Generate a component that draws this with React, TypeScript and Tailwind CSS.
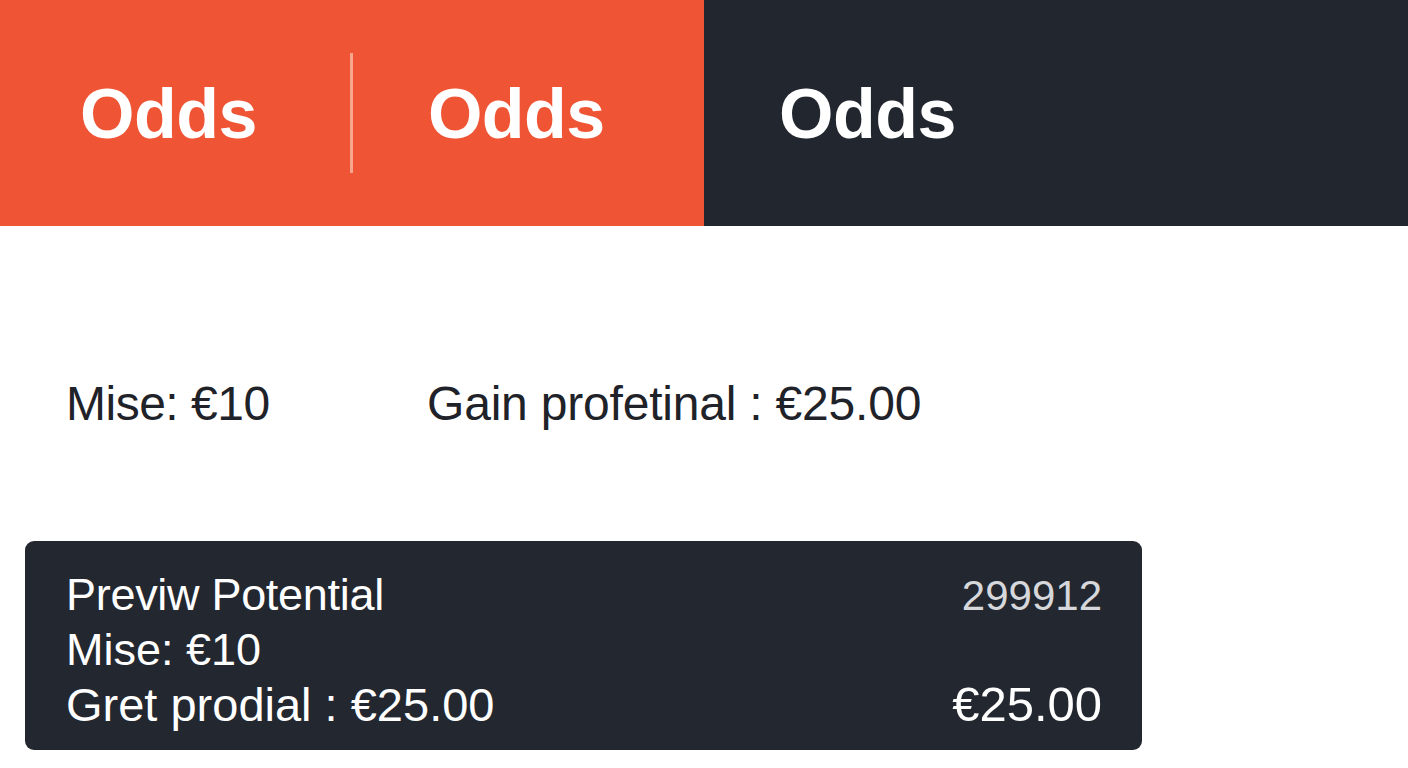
export default function App() {
  const font = { fontFamily: '"Liberation Sans", Arial, sans-serif' };
  return (
    <div className="w-[1408px] h-[768px] bg-white overflow-hidden" style={font}>
      {/* Odds tab bar */}
      <div className="flex h-[226px]">
        <div className="w-[704px] bg-[#ef5535] flex items-center">
          <span className="pl-[80px] pt-[1px] text-[70px] leading-[70px] font-bold text-white tracking-[-0.5px]">
            Odds
          </span>
          <div className="ml-[93px] w-[3px] h-[120px] bg-[#f8a58f]" />
          <span className="ml-[75px] pt-[1px] text-[70px] leading-[70px] font-bold text-white tracking-[-0.5px]">
            Odds
          </span>
        </div>
        <div className="flex-1 bg-[#22262e] flex items-center">
          <span className="pl-[75px] pt-[1px] text-[70px] leading-[70px] font-bold text-white tracking-[-0.5px]">
            Odds
          </span>
        </div>
      </div>

      {/* Stake summary */}
      <div className="flex mt-[154px] text-[48px] leading-[48px] text-[#1f2329]">
        <span className="pl-[66px] w-[427px] tracking-[-0.5px]">Mise: €10</span>
        <span className="tracking-[-0.2px]">Gain profetinal : €25.00</span>
      </div>

      {/* Preview card */}
      <div className="mt-[113px] ml-[25px] w-[1117px] h-[209px] rounded-[9px] bg-[#23272f] pl-[41px] pr-[40px] pt-[27px] text-white text-[45px] leading-[54px]">
        <div className="flex justify-between items-baseline">
          <span className="tracking-[-0.3px]">Previw Potential</span>
          <span className="text-[42px] text-[#d6d8db]">299912</span>
        </div>
        <div>Mise: €10</div>
        <div className="flex justify-between items-baseline">
          <span className="text-[47px]">Gret prodial : €25.00</span>
          <span className="text-[49px]">€25.00</span>
        </div>
      </div>
    </div>
  );
}
